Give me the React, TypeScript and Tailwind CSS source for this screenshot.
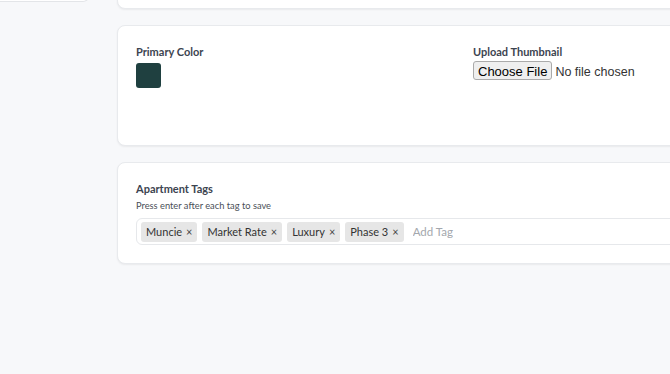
import { useState } from "react";

const font = { fontFamily: "Lato, 'Open Sans', sans-serif" };

function Tag({ label, onRemove }: { label: string; onRemove: () => void }) {
  return (
    <span className="flex h-[20px] items-center gap-[4px] rounded-[3px] bg-[#e6e6e6] px-[5px] text-[11px] text-[#333]">
      {label}
      <button onClick={onRemove} className="text-[11px] leading-none text-[#444]">
        ×
      </button>
    </span>
  );
}

export default function App() {
  const [tags, setTags] = useState(["Muncie", "Market Rate", "Luxury", "Phase 3"]);
  const [draft, setDraft] = useState("");

  return (
    <div className="flex h-[374px] w-[670px] overflow-hidden bg-[#f7f8fa]" style={font}>
      {/* sidebar (scrolled) */}
      <div className="w-[89px] shrink-0">
        <div className="-mt-[40px] h-[42px] rounded-br-md border-b border-r border-[#e3e5e8] bg-white" />
      </div>

      <div className="ml-[28px] flex w-[688px] shrink-0 flex-col gap-4">
        {/* card scrolled off the top */}
        <div className="-mt-[100px] h-[109px] rounded-lg border border-[#e8eaed] bg-white shadow-[0_1px_2px_rgba(0,0,0,0.06)]" />

        <div className="grid h-[121px] grid-cols-2 gap-6 rounded-lg border border-[#e8eaed] bg-white px-[18px] pt-[18px] shadow-[0_1px_2px_rgba(0,0,0,0.06)]">
          <div>
            <div className="text-[11px] font-bold text-[#3c4450]">Primary Color</div>
            <div className="mt-[2px] h-[25px] w-[25px] rounded-[3px] bg-[#1f4040]" />
          </div>
          <div>
            <div className="text-[11px] font-bold text-[#3c4450]">Upload Thumbnail</div>
            <input
              type="file"
              className="block text-[12.5px] text-[#333] file:mr-[3px] file:h-[19px] file:rounded-[3px] file:border file:border-[#aaa] file:bg-[#efefef] file:px-[4px] file:text-[13px] file:text-black"
              style={{ fontFamily: "'Liberation Sans', Arial, sans-serif" }}
            />
          </div>
        </div>

        <div className="h-[102px] rounded-lg border border-[#e8eaed] bg-white px-[18px] pt-[18px] shadow-[0_1px_2px_rgba(0,0,0,0.06)]">
          <div className="text-[11px] font-bold text-[#3c4450]">Apartment Tags</div>
          <div className="mt-[1px] text-[9.3px] text-[#4a4f57]">Press enter after each tag to save</div>
          <div className="mt-[6px] flex h-[27px] items-center gap-[5px] rounded-md border border-[#e6e8eb] px-[4px]">
            {tags.map((t) => (
              <Tag key={t} label={t} onRemove={() => setTags(tags.filter((x) => x !== t))} />
            ))}
            <input
              value={draft}
              onChange={(e) => setDraft(e.target.value)}
              onKeyDown={(e) => {
                if (e.key === "Enter" && draft.trim()) {
                  setTags([...tags, draft.trim()]);
                  setDraft("");
                }
              }}
              placeholder="Add Tag"
              className="ml-[4px] flex-1 text-[11.5px] text-[#333] outline-none placeholder:text-[#a3a7ad]"
            />
          </div>
        </div>
      </div>
    </div>
  );
}
